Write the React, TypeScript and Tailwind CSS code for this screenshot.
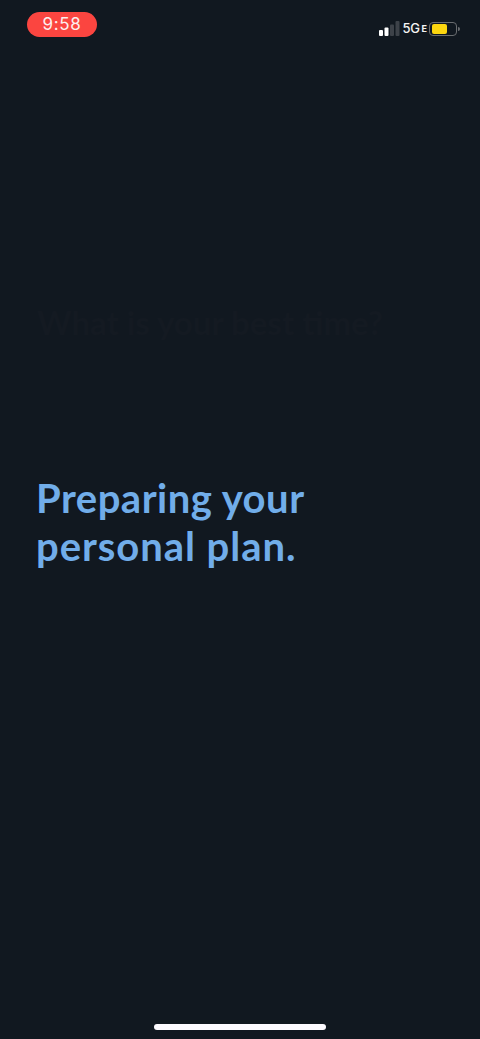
export default function App() {
  return (
    <div className="flex h-[1039px] w-[480px] flex-col overflow-hidden bg-[#111820] font-['Lato',sans-serif]">
      {/* Status bar */}
      <div className="flex h-[48px] shrink-0 items-start justify-between pl-[27px] pr-[20px] pt-[12px]">
        <div className="flex h-[25px] w-[70px] items-center justify-center rounded-full bg-[#fb4540] font-['Inter',sans-serif] text-[17px] tracking-[0.7px] text-[#fdeeee]">
          9:58
        </div>
        <div className="mt-[9px] flex items-center">
          <svg width="21" height="15" viewBox="0 0 21 15" className="mr-[3px]">
            <rect x="0" y="9" width="4" height="6" rx="1" fill="#fff" />
            <rect x="5.5" y="6.5" width="4" height="8.5" rx="1" fill="#fff" />
            <rect x="11" y="3.5" width="4" height="11.5" rx="1" fill="#3d4249" />
            <rect x="16.5" y="0" width="4" height="15" rx="1" fill="#3d4249" />
          </svg>
          <span className="font-['Inter',sans-serif] text-[13px] font-medium leading-none tracking-[-0.4px] text-[#f4f4f4]">5G</span>
          <span className="ml-[2px] mr-[2px] font-['Inter',sans-serif] text-[9px] font-bold leading-none text-[#f4f4f4]">E</span>
          <div className="flex items-center">
            <div className="flex h-[14px] w-[28px] items-center rounded-[4px] border border-[#6a6d70] p-[2px]">
              <div className="h-[10px] w-[15px] rounded-[2px] bg-[#fcd60f]" />
            </div>
            <div className="ml-[1px] h-[4px] w-[2px] rounded-r-full bg-[#6a6d70]" />
          </div>
        </div>
      </div>

      {/* Faded heading behind the loader */}
      <div className="mt-[254px] h-[40px] pl-[37px] text-[33px] font-bold leading-[40px] text-[#141a22]">
        What is your best time?
      </div>

      {/* Loading message */}
      <h1 className="mt-[132px] pl-[36px] text-[40px] font-bold leading-[48px] text-[#71ade9]">
        <span className="tracking-[0.5px]">Preparing your</span>
        <br />
        <span className="tracking-[0.95px]">personal plan.</span>
      </h1>

      {/* Home indicator */}
      <div className="mt-auto flex justify-center pb-[9px]">
        <div className="h-[6px] w-[172px] rounded-full bg-[#fdfbff]" />
      </div>
    </div>
  );
}
